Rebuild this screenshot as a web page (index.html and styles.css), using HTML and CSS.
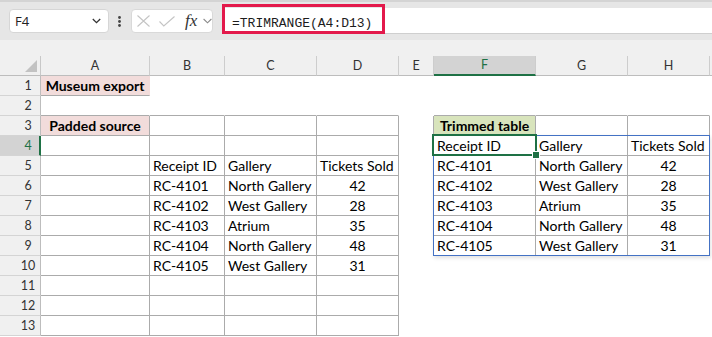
FILE: index.html
```html
<!DOCTYPE html>
<html>
<head>
<meta charset="utf-8">
<link rel="stylesheet" href="styles.css">
</head>
<body>
<div class="app">
  <div class="toolbar">
    <div class="namebox">
      <span class="namebox-text">F4</span>
      <svg class="nb-chev" width="9" height="6" viewBox="0 0 9 6"><path d="M0.8 1 L4.5 4.7 L8.2 1" fill="none" stroke="#333" stroke-width="1.3"/></svg>
    </div>
    <svg class="kebab" width="22" height="24" viewBox="0 0 22 24"><circle cx="10.5" cy="8.5" r="1.4" fill="#444"/><circle cx="10.5" cy="12.5" r="1.4" fill="#444"/><circle cx="10.5" cy="16.5" r="1.4" fill="#444"/></svg>
    <div class="fnbox">
      <svg class="ic-x" width="13" height="12" viewBox="0 0 13 12"><path d="M0.5 0.5 L12.5 11.5 M12.5 0.5 L0.5 11.5" fill="none" stroke="#c4c4c4" stroke-width="1.1"/></svg>
      <svg class="ic-check" width="16" height="11" viewBox="0 0 16 11"><path d="M0.5 5.5 L4.8 10 L15.5 0.5" fill="none" stroke="#c4c4c4" stroke-width="1.1"/></svg>
      <span class="fx">fx</span>
      <svg class="ic-chev" width="9" height="6" viewBox="0 0 9 6"><path d="M0.6 1 L4.5 4.8 L8.4 1" fill="none" stroke="#8a8a8a" stroke-width="1.1"/></svg>
    </div>
    <div class="formula"><span class="formula-text">=TRIMRANGE(A4:D13)</span></div>
    <div class="formula-highlight"></div>
  </div>
  <div class="gap"></div>
  <div class="sheet">
    <div class="grid">
      <!-- header row -->
      <div class="corner"><svg width="41" height="20" viewBox="0 0 41 20"><path d="M37 4 L37 16 L25 16 Z" fill="#c2c2c2"/></svg></div>
      <div class="ch">A</div>
      <div class="ch">B</div>
      <div class="ch">C</div>
      <div class="ch">D</div>
      <div class="ch">E</div>
      <div class="ch ch-sel">F</div>
      <div class="ch">G</div>
      <div class="ch">H</div>
      <div class="ch ch-end"></div>

      <!-- row 1 -->
      <div class="rh">1</div>
      <div class="c pink bold center bb">Museum export</div>
      <div class="c"></div><div class="c"></div><div class="c"></div><div class="c"></div><div class="c"></div><div class="c"></div><div class="c"></div><div class="c"></div>

      <!-- row 2 -->
      <div class="rh">2</div>
      <div class="c bb"></div><div class="c bb"></div><div class="c bb"></div><div class="c bb"></div>
      <div class="c"></div>
      <div class="c bb"></div><div class="c bb"></div><div class="c bb"></div>
      <div class="c"></div>

      <!-- row 3 -->
      <div class="rh">3</div>
      <div class="c pink bold center b">Padded source</div>
      <div class="c b"></div><div class="c b"></div><div class="c b"></div>
      <div class="c br"></div>
      <div class="c green bold center b">Trimmed table</div>
      <div class="c b"></div><div class="c b"></div>
      <div class="c"></div>

      <!-- row 4 -->
      <div class="rh rh-sel">4</div>
      <div class="c b"></div><div class="c b"></div><div class="c b"></div><div class="c b"></div>
      <div class="c"></div>
      <div class="c b">Receipt ID</div><div class="c b">Gallery</div><div class="c b">Tickets Sold</div>
      <div class="c"></div>

      <!-- row 5 -->
      <div class="rh">5</div>
      <div class="c b"></div><div class="c b">Receipt ID</div><div class="c b">Gallery</div><div class="c b">Tickets Sold</div>
      <div class="c"></div>
      <div class="c b">RC-4101</div><div class="c b">North Gallery</div><div class="c b center">42</div>
      <div class="c"></div>

      <!-- row 6 -->
      <div class="rh">6</div>
      <div class="c b"></div><div class="c b">RC-4101</div><div class="c b">North Gallery</div><div class="c b center">42</div>
      <div class="c"></div>
      <div class="c b">RC-4102</div><div class="c b">West Gallery</div><div class="c b center">28</div>
      <div class="c"></div>

      <!-- row 7 -->
      <div class="rh">7</div>
      <div class="c b"></div><div class="c b">RC-4102</div><div class="c b">West Gallery</div><div class="c b center">28</div>
      <div class="c"></div>
      <div class="c b">RC-4103</div><div class="c b">Atrium</div><div class="c b center">35</div>
      <div class="c"></div>

      <!-- row 8 -->
      <div class="rh">8</div>
      <div class="c b"></div><div class="c b">RC-4103</div><div class="c b">Atrium</div><div class="c b center">35</div>
      <div class="c"></div>
      <div class="c b">RC-4104</div><div class="c b">North Gallery</div><div class="c b center">48</div>
      <div class="c"></div>

      <!-- row 9 -->
      <div class="rh">9</div>
      <div class="c b"></div><div class="c b">RC-4104</div><div class="c b">North Gallery</div><div class="c b center">48</div>
      <div class="c"></div>
      <div class="c b">RC-4105</div><div class="c b">West Gallery</div><div class="c b center">31</div>
      <div class="c"></div>

      <!-- row 10 -->
      <div class="rh">10</div>
      <div class="c b"></div><div class="c b">RC-4105</div><div class="c b">West Gallery</div><div class="c b center">31</div>
      <div class="c"></div><div class="c"></div><div class="c"></div><div class="c"></div><div class="c"></div>

      <!-- row 11 -->
      <div class="rh">11</div>
      <div class="c b"></div><div class="c b"></div><div class="c b"></div><div class="c b"></div>
      <div class="c"></div><div class="c"></div><div class="c"></div><div class="c"></div><div class="c"></div>

      <!-- row 12 -->
      <div class="rh">12</div>
      <div class="c b"></div><div class="c b"></div><div class="c b"></div><div class="c b"></div>
      <div class="c"></div><div class="c"></div><div class="c"></div><div class="c"></div><div class="c"></div>

      <!-- row 13 -->
      <div class="rh">13</div>
      <div class="c b"></div><div class="c b"></div><div class="c b"></div><div class="c b"></div>
      <div class="c"></div><div class="c"></div><div class="c"></div><div class="c"></div><div class="c"></div>
    </div>
    <div class="spill"></div>
    <div class="selection"><div class="handle"></div></div>
  </div>
</div>
</body>
</html>
```

FILE: styles.css
```css
html, body {
  margin: 0;
  padding: 0;
  background: #ffffff;
}

.app {
  width: 712px;
  height: 337px;
  overflow: hidden;
  font-family: Lato, "Liberation Sans", sans-serif;
  color: #000;
}

/* ---------- formula bar ---------- */
.toolbar {
  position: relative;
  height: 40px;
  box-sizing: border-box;
  border-top: 2px solid #d4d4d4;
  background: #e6e6e6;
  display: flex;
  align-items: flex-start;
}

.namebox {
  margin-top: 7px;
  margin-left: 9px;
  width: 100px;
  height: 24px;
  box-sizing: border-box;
  background: #fff;
  border: 1px solid #d6d6d6;
  border-radius: 4px;
  display: flex;
  align-items: center;
  padding: 0 7px 0 5px;
}

.namebox-text {
  flex: 1;
  font-family: "Open Sans", "Noto Sans", sans-serif;
  font-size: 13px;
  color: #222;
}

.kebab {
  margin-top: 7px;
  flex: none;
}

.fnbox {
  margin-top: 7px;
  width: 82px;
  height: 24px;
  box-sizing: border-box;
  background: #fff;
  border: 1px solid #d9d9d9;
  border-radius: 4px;
  display: flex;
  align-items: center;
  padding-left: 5px;
}

.ic-x { flex: none; }
.ic-check { flex: none; margin-left: 9px; }
.fx {
  margin-left: 10px;
  font-family: "Liberation Serif", serif;
  font-style: italic;
  font-size: 17px;
  color: #333;
  line-height: 20px;
  width: 15px;
}
.ic-chev { flex: none; margin-left: 5px; }

.formula {
  margin-top: 6px;
  margin-left: 9px;
  flex: 1;
  height: 26px;
  box-sizing: border-box;
  background: #fff;
  border-bottom: 1px solid #cfcfcf;
  padding-left: 10px;
  line-height: 25px;
}

.formula-text {
  font-family: "Liberation Mono", monospace;
  font-size: 13px;
  color: #1c1c1c;
}

.formula-highlight {
  position: absolute;
  left: 222px;
  top: 2px;
  width: 163px;
  height: 30px;
  box-sizing: border-box;
  border: 3px solid #e3194b;
}

.gap {
  height: 16px;
  background: #f0f0f0;
}

/* ---------- sheet ---------- */
.sheet {
  position: relative;
}

.grid {
  display: grid;
  grid-template-columns: 41px 109px 75px 92px 82px 35px 102px 92px 82px 2px;
  grid-auto-rows: 20px;
}

.corner {
  background: #f0f0f0;
  box-sizing: border-box;
  border-right: 1px solid #c8c8c8;
  border-bottom: 1px solid #bdbdbd;
}
.corner svg { display: block; }

.ch {
  background: #f0f0f0;
  box-sizing: border-box;
  border-right: 1px solid #cdcdcd;
  border-bottom: 1px solid #bdbdbd;
  font-size: 12.5px;
  line-height: 19px;
  text-align: center;
  color: #333;
}
.ch-sel {
  background: #d3d3d3;
  border-bottom: 2px solid #1e7145;
  color: #1e7145;
  line-height: 18px;
}
.ch-end { border-right: none; }

.rh {
  background: #f0f0f0;
  box-sizing: border-box;
  border-right: 1px solid #bdbdbd;
  border-bottom: 1px solid #d4d4d4;
  font-size: 12.5px;
  line-height: 19px;
  padding-left: 16px;
  text-align: center;
  color: #333;
}
.rh-sel {
  background: #d3d3d3;
  border-right: 2px solid #1e7145;
  padding-left: 17px;
  color: #1e7145;
}

.c {
  box-sizing: border-box;
  border-right: 1px solid transparent;
  border-bottom: 1px solid transparent;
  font-size: 14px;
  line-height: 19px;
  padding: 0 3px;
  white-space: nowrap;
  overflow: visible;
}

.b {
  border-right-color: #ababab;
  border-bottom-color: #ababab;
}
.bb { border-bottom-color: #ababab; }
.br { border-right-color: #ababab; }

.pink { background: #f2dcdb; }
.green { background: #d8e4bc; }
.bold { font-weight: 700; }
.center { text-align: center; padding: 0; }

/* spill range outline and active cell */
.spill {
  position: absolute;
  left: 433px;
  top: 79px;
  width: 277px;
  height: 121px;
  box-sizing: border-box;
  border: 1px solid #4472c4;
  box-shadow: 1px 2px 4px rgba(0, 0, 0, 0.12);
  pointer-events: none;
}

.selection {
  position: absolute;
  left: 432px;
  top: 78px;
  width: 105px;
  height: 22px;
  box-sizing: border-box;
  border: 2px solid #1e7145;
  pointer-events: none;
}

.handle {
  position: absolute;
  right: -4px;
  bottom: -4px;
  width: 6px;
  height: 6px;
  box-sizing: border-box;
  background: #1e7145;
  outline: 1px solid #fff;
}
```
